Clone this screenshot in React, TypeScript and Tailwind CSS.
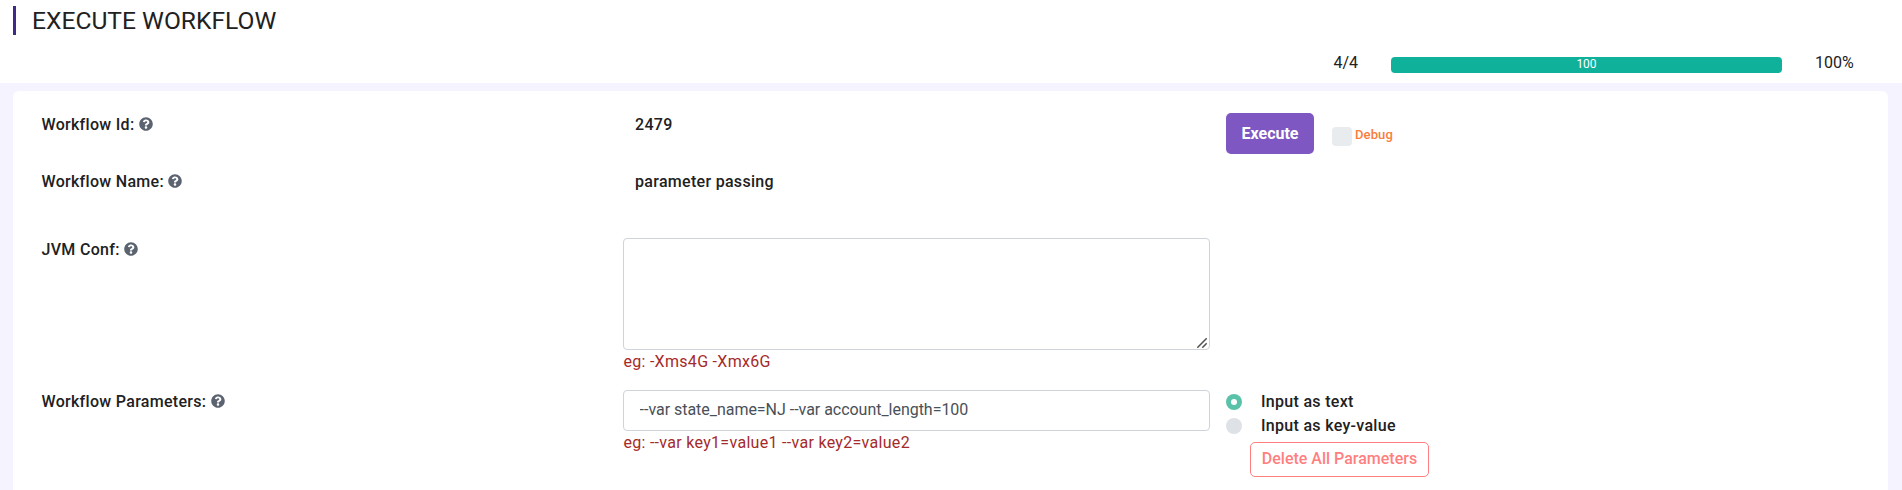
import React from "react";
import { FaQuestionCircle } from "react-icons/fa";

function Label({ children }: { children: string }) {
  return (
    <div className="flex h-6 items-center whitespace-nowrap pl-[28.5px] font-medium leading-6">
      <span>{children}</span>
      <FaQuestionCircle className="mb-[2px] ml-[4.4px] size-[14px] text-[#5c6370]" />
    </div>
  );
}

function Row({ label, className, children }: { label: string; className: string; children: React.ReactNode }) {
  return (
    <div className={`grid grid-cols-[610px_587px_1fr] ${className}`}>
      <Label>{label}</Label>
      {children}
    </div>
  );
}

export default function App() {
  return (
    <div className="flex h-[490px] w-[1902px] flex-col overflow-hidden bg-[#f5f3ff] font-['Roboto',sans-serif] text-[16px] leading-6 tracking-[0.3px] text-[#212121]">
      <header className="h-[83px] shrink-0 bg-white pt-[6px]">
        <div className="ml-[13px] flex h-[29px] items-center border-l-[3px] border-[#3f2b86] pl-4">
          <h1 className="whitespace-nowrap text-[24.6px] font-normal leading-[29px] tracking-[0px]">EXECUTE WORKFLOW</h1>
        </div>
        <div className="flex h-12 items-start pl-[1333.5px] pt-4 tracking-[0px]">
          <span className="w-[57.5px]">4/4</span>
          <div className="mt-[6px] flex h-4 w-[391px] items-center justify-center rounded bg-[#10b19b] text-[12px] leading-4 text-white">
            <span className="-mt-[3px]">100</span>
          </div>
          <span className="pl-[33px]">100%</span>
        </div>
      </header>

      <main className="ml-[13px] mt-2 flex w-[1875px] grow flex-col rounded-t-[6px] bg-white pt-[22px]">
        <Row label="Workflow Id:" className="h-[57px]">
          <div className="pl-3 font-medium">2479</div>
          <div className="flex items-start pl-4">
            <button className="h-[41px] w-[88px] rounded-[5px] bg-[#7e57c2] text-[16px] font-bold tracking-[0px] text-white">Execute</button>
            <label className="ml-[18px] mt-[11px] flex items-center text-[13px] font-medium tracking-[0.1px] text-[#fa7d3c]">
              <span className="mt-[3px] h-[19px] w-5 rounded bg-[#e9ecef]" />
              <span className="ml-[3px] leading-5">Debug</span>
            </label>
          </div>
        </Row>
        <Row label="Workflow Name:" className="h-[68px]">
          <div className="pl-3 font-medium">parameter passing</div>
        </Row>
        <Row label="JVM Conf:" className="h-[152px]">
          <div>
            <div className="relative h-[112px]">
              <textarea className="block h-[112px] w-[587px] resize-none rounded border border-[#ced4da] bg-white" />
              <svg className="absolute bottom-[2px] right-[3px] size-[10px]" viewBox="0 0 10 10" fill="none" stroke="#505050" strokeWidth="1.5">
                <path d="M0.3 9.7 9.7 0.3M5.3 9.7 9.7 5.3" />
              </svg>
            </div>
            <div className="pl-[0.4px] text-[#a52a2a]">eg: -Xms4G -Xmx6G</div>
          </div>
        </Row>
        <Row label="Workflow Parameters:" className="h-[100px]">
          <div>
            <input
              className="block h-[41px] w-[587px] rounded border border-[#ced4da] bg-white px-[15.6px] pb-[2px] tracking-[-0.03px] text-[#495057]"
              defaultValue="--var state_name=NJ --var account_length=100"
            />
            <div className="pl-[0.4px] text-[#a52a2a]">eg: --var key1=value1 --var key2=value2</div>
          </div>
          <div className="pl-4 font-medium">
            <div className="flex h-6 items-center">
              <span className="flex size-4 items-center justify-center rounded-full bg-[#5bc2aa]">
                <span className="size-[6px] rounded-full bg-white" />
              </span>
              <span className="ml-[19px]">Input as text</span>
            </div>
            <div className="flex h-6 items-center">
              <span className="size-4 rounded-full bg-[#dee2e6]" />
              <span className="ml-[19px]">Input as key-value</span>
            </div>
            <button className="ml-6 mt-1 h-[35px] w-[179px] whitespace-nowrap rounded-[5px] border border-[#ff7f7f] pb-px font-medium tracking-[0px] text-[#ff7f7f]">
              Delete All Parameters
            </button>
          </div>
        </Row>
      </main>
    </div>
  );
}
